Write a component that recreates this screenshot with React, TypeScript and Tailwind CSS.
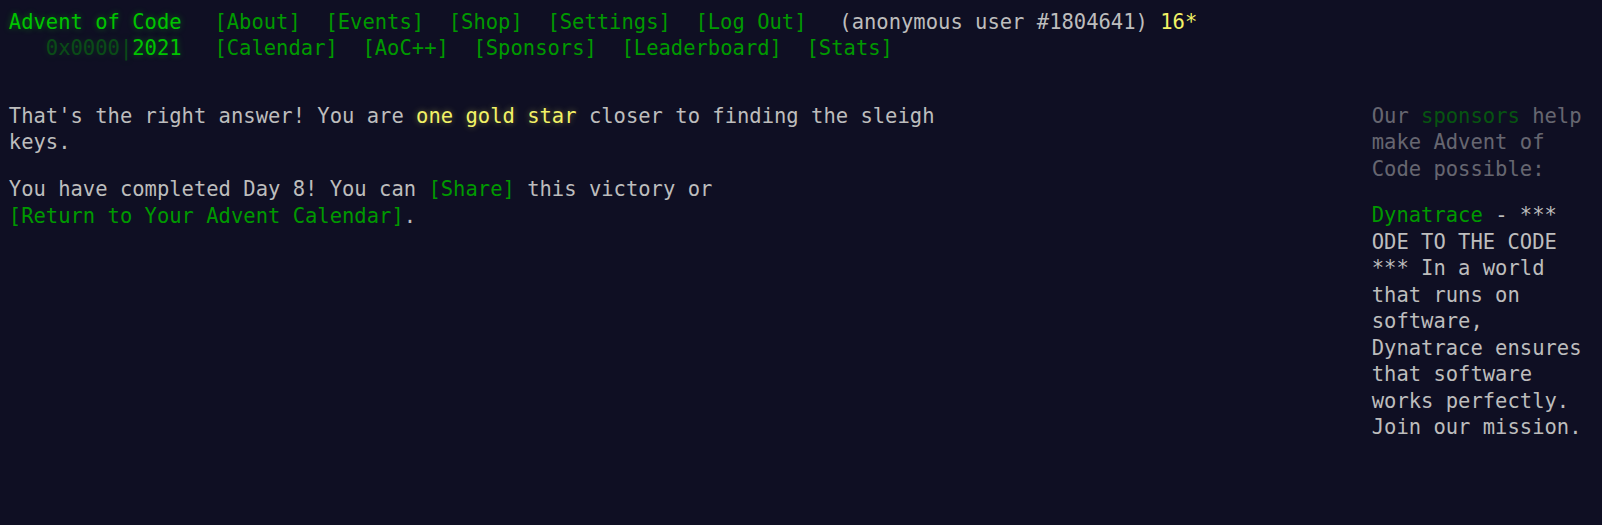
const glow = "[text-shadow:0_0_6px_#00cc0070]";

const NavItem = ({ label }: { label: string }) => (
  <li className="px-[0.6em]">
    <a className="text-[#009900]">[{label}]</a>
  </li>
);

const topNav = ["About", "Events", "Shop", "Settings", "Log Out"];
const eventNav = ["Calendar", "AoC++", "Sponsors", "Leaderboard", "Stats"];

export default function App() {
  return (
    <div className="h-[525px] bg-[#0f0f23] p-[8.8px] font-['DejaVu_Sans_Mono',monospace] text-[20.5px] font-normal leading-[26.5px] text-[#bdbdbd]">
      <header className="mb-[41px] whitespace-pre">
        <div className="flex">
          <h1 className={`pr-[1em] font-normal text-[#00c400] ${glow}`}>Advent of Code</h1>
          <ul className="flex">
            {topNav.map((n) => (
              <NavItem key={n} label={n} />
            ))}
          </ul>
          <div className="pl-[1em]">
            (anonymous user #1804641) <span className="text-[#f2f266]">16*</span>
          </div>
        </div>
        <div className="flex">
          <h1 className={`pr-[1em] font-normal text-[#00c400] ${glow}`}>
            {"   "}
            <span className="opacity-[0.33]">0x0000|</span>
            <a>2021</a>
          </h1>
          <ul className="flex">
            {eventNav.map((n) => (
              <NavItem key={n} label={n} />
            ))}
          </ul>
        </div>
      </header>

      <main className="flex items-start">
        <article className="w-[928px]">
          <p>
            That's the right answer! You are{" "}
            <em className="not-italic text-[#f2f266] [text-shadow:0_0_6px_#ffff6660]">one gold star</em>{" "}
            closer to finding the sleigh keys.
          </p>
          <p className="mt-[20.5px]">
            You have completed Day 8! You can <span className="text-[#009900]">[Share]</span> this victory or{" "}
            <a className="whitespace-nowrap text-[#009900]">[Return to Your Advent Calendar]</a>.
          </p>
        </article>

        <aside className="ml-auto mr-[1.5px] w-[220px]">
          <div className="opacity-50">
            Our <a className="text-[#009900]">sponsors</a> help make Advent of Code possible:
          </div>
          <p className="mt-[20px]">
            <a className="text-[#009900]">Dynatrace</a> - *** ODE TO THE CODE *** In a world that runs on
            software, Dynatrace ensures that software works perfectly. Join our mission.
          </p>
        </aside>
      </main>
    </div>
  );
}
